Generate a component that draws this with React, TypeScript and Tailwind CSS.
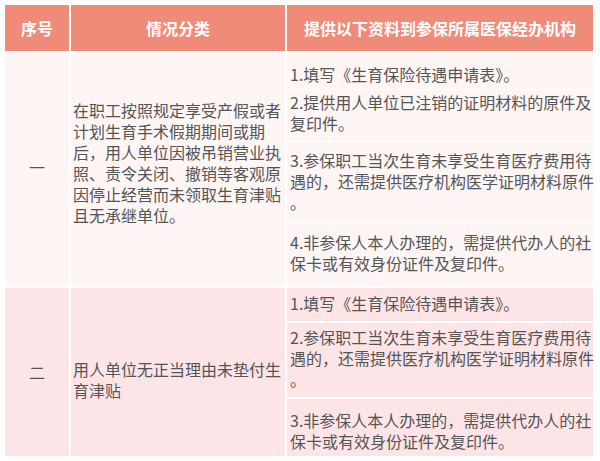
import React from "react";

const font = { fontFamily: '"Noto Sans CJK SC", "Noto Sans", sans-serif' };

function Lines({ lines }: { lines: string[] }) {
  return (
    <>
      {lines.map((l, i) => (
        <div key={i} className="whitespace-nowrap">
          {l}
        </div>
      ))}
    </>
  );
}

export default function App() {
  return (
    <div
      className="w-[600px] h-[461px] bg-white pt-[5px] pl-[5px] text-[#555555] text-[16px] leading-[21px]"
      style={font}
    >
      <div className="grid grid-cols-[64px_214px_306px] grid-rows-[46px_233px_168px] gap-x-[2px] gap-y-[2px]">
        {/* header */}
        <div className="bg-[#F08A79] text-white font-bold flex items-center justify-center">序号</div>
        <div className="bg-[#F08A79] text-white font-bold flex items-center justify-center">情况分类</div>
        <div className="bg-[#F08A79] text-white font-bold flex items-center justify-center">
          提供以下资料到参保所属医保经办机构
        </div>

        {/* row 1 */}
        <div className="bg-[#FEF5F5] flex items-center justify-center pb-[4px]">一</div>
        <div className="bg-[#FEF5F5] flex items-center pl-[2px] pb-[14px]">
          <div>
            <Lines
              lines={[
                "在职工按照规定享受产假或者",
                "计划生育手术假期期间或期",
                "后，用人单位因被吊销营业执",
                "照、责令关闭、撤销等客观原",
                "因停止经营而未领取生育津贴",
                "且无承继单位。",
              ]}
            />
          </div>
        </div>
        <div className="flex flex-col gap-y-[1px] bg-white">
          <div className="h-[36px] bg-[#FEF5F5] pl-[3px] pt-[11px]">
            <Lines lines={["1.填写《生育保险待遇申请表》。"]} />
          </div>
          <div className="h-[51px] bg-[#FEF5F5] pl-[3px] pt-[2px]">
            <Lines lines={["2.提供用人单位已注销的证明材料的原件及", "复印件。"]} />
          </div>
          <div className="h-[80px] bg-[#FEF5F5] pl-[3px] pt-[8px]">
            <Lines
              lines={["3.参保职工当次生育未享受生育医疗费用待", "遇的，还需提供医疗机构医学证明材料原件", "。"]}
            />
          </div>
          <div className="flex-1 bg-[#FEF5F5] pl-[3px] pt-[9px]">
            <Lines lines={["4.非参保人本人办理的，需提供代办人的社", "保卡或有效身份证件及复印件。"]} />
          </div>
        </div>

        {/* row 2 */}
        <div className="bg-[#FDE5E7] flex items-center justify-center pt-[1px]">二</div>
        <div className="bg-[#FDE5E7] flex items-center pl-[2px] pt-[15px]">
          <div>
            <Lines lines={["用人单位无正当理由未垫付生", "育津贴"]} />
          </div>
        </div>
        <div className="flex flex-col gap-y-[2px] bg-white">
          <div className="h-[33px] bg-[#FDE5E7] pl-[3px] pt-[5px]">
            <Lines lines={["1.填写《生育保险待遇申请表》。"]} />
          </div>
          <div className="h-[74px] bg-[#FDE5E7] pl-[3px] pt-[4px]">
            <Lines
              lines={["2.参保职工当次生育未享受生育医疗费用待", "遇的，还需提供医疗机构医学证明材料原件", "。"]}
            />
          </div>
          <div className="flex-1 bg-[#FDE5E7] pl-[3px] pt-[11px]">
            <Lines lines={["3.非参保人本人办理的，需提供代办人的社", "保卡或有效身份证件及复印件。"]} />
          </div>
        </div>
      </div>
    </div>
  );
}
